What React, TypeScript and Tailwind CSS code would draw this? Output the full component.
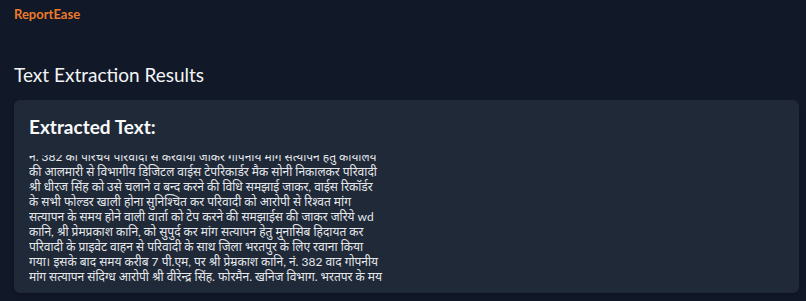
import { useEffect, useRef } from "react";

const LINES = [
  "नं. 382 का परिचय परिवादी से करवाया जाकर गोपनीय मांग सत्यापन हेतु कार्यालय",
  "की आलमारी से विभागीय डिजिटल वाईस टेपरिकार्डर मैक सोनी निकालकर परिवादी",
  "श्री धीरज सिंह को उसे चलाने व बन्द करने की विधि समझाई जाकर, वाईस रिकॉर्डर",
  "के सभी फोल्डर खाली होना सुनिश्चित कर परिवादी को आरोपी से रिश्वत मांग",
  "सत्यापन के समय होने वाली वार्ता को टेप करने की समझाईस की जाकर जरिये wd",
  "कानि, श्री प्रेमप्रकाश कानि, को सुपुर्द कर मांग सत्यापन हेतु मुनासिब हिदायत कर",
  "परिवादी के प्राइवेट वाहन से परिवादी के साथ जिला भरतपुर के लिए रवाना किया",
  "गया। इसके बाद समय करीब 7 पी.एम, पर श्री प्रेम्रकाश कानि, नं. 382 वाद गोपनीय",
  "मांग सत्यापन संदिग्ध आरोपी श्री वीरेन्द्र सिंह. फोरमैन. खनिज विभाग. भरतपर के मय",
  "मुखबिर के साथ वार्ता की गई जिसमें आरोपी द्वारा रिश्वत राशि की मांग की गई",
];

export default function App() {
  const boxRef = useRef<HTMLDivElement>(null);

  useEffect(() => {
    // the reference shows the text box already scrolled a little
    if (boxRef.current) boxRef.current.scrollTop = 6;
  }, []);

  return (
    <div
      className="min-h-screen bg-[#111827] pl-[14px] pr-[7px]"
      style={{ fontFamily: 'Lato, "Noto Sans", "Noto Sans Devanagari", sans-serif' }}
    >
      <header className="pt-[5px] text-[13px] font-bold leading-[18px] text-[#ea7a2c]">ReportEase</header>

      <h1 className="mt-[38px] text-[19px] font-normal leading-[28px] text-[#f3f4f6]">Text Extraction Results</h1>

      <section className="mt-[11px] rounded-md bg-[#1f2937] px-[15px] pb-[9px] pt-[13px] shadow-md">
        <h2 className="text-[19px] font-bold leading-[28px] text-[#f9fafb]">Extracted Text:</h2>
        <div ref={boxRef} className="mt-[14px] h-[129px] overflow-hidden text-[12px] leading-[15px] text-[#e5e7eb]">
          {LINES.map((l) => (
            <div key={l} className="whitespace-nowrap">{l}</div>
          ))}
        </div>
      </section>
    </div>
  );
}
